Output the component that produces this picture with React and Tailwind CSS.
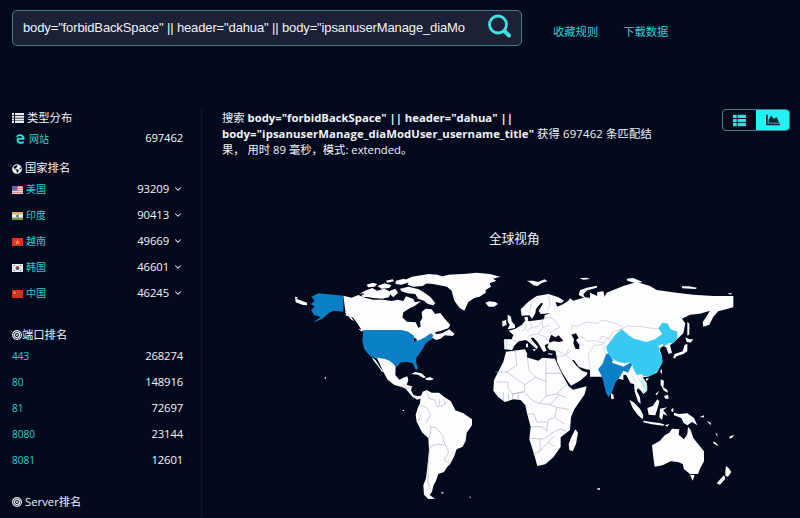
import React from 'react';
import { FaThList, FaChartArea, FaEdgeLegacy, FaGlobeAmericas } from 'react-icons/fa';
import { FiChevronDown } from 'react-icons/fi';

const Flag = ({ code }) => (
  <svg viewBox="0 0 22 16" className="w-[11px] h-2 shrink-0 mt-px">
    {code === 'us' && (
      <>
        <rect width="22" height="16" fill="#e8d5d6" />
        <path d="M0 1h22M0 5h22M0 9h22M0 13h22" stroke="#d98a80" strokeWidth="2" />
        <rect width="11" height="9" fill="#5c6aa8" />
      </>
    )}
    {code === 'in' && (
      <>
        <rect width="22" height="16" fill="#f2f0e4" />
        <rect width="22" height="5" fill="#e0b070" />
        <rect y="11" width="22" height="5" fill="#6f9f45" />
        <circle cx="11" cy="8" r="2.500" fill="#5360a0" />
      </>
    )}
    {code === 'vn' && (
      <>
        <rect width="22" height="16" fill="#dc3127" />
        <path d="M11 3l1.500 3.500h4l-3 2.500 1 4-3.500-2.300-3.500 2.300 1-4-3-2.500h4z" fill="#f5a83c" />
      </>
    )}
    {code === 'kr' && (
      <>
        <rect width="22" height="16" fill="#eeeef2" />
        <path d="M7 8a4 4 0 0 1 8 0z" fill="#c44450" />
        <path d="M7 8a4 4 0 0 0 8 0z" fill="#39508f" />
        <path d="M3 4l3-2M16 2l3 2M3 12l3 2M16 14l3-2" stroke="#444" strokeWidth="1.500" />
      </>
    )}
    {code === 'cn' && (
      <>
        <rect width="22" height="16" fill="#d92c23" />
        <path d="M5 2l1 2.500h2.500l-2 1.700.8 2.500-2.300-1.500-2.300 1.500.8-2.500-2-1.700h2.500z" fill="#f5a93c" />
        <path d="M11 2h1.500M13 5h1.500M11 9h1.500" stroke="#f5a93c" />
      </>
    )}
  </svg>
);

const ListIcon = () => (
  <svg viewBox="0 0 12 10" className="w-3 h-2.5" fill="#e9ebf2">
    <path d="M0 0h2v2H0zM3 0h9v2H3zM0 2.700h2v2H0zM3 2.700h9v2H3zM0 5.400h2v2H0zM3 5.400h9v2H3zM0 8.100h2V10H0zM3 8.100h9V10H3z" />
  </svg>
);

const Bullseye = () => (
  <svg viewBox="0 0 20 20" className="w-2.5 h-2.5" fill="none" stroke="#e9ebf2">
    <circle cx="10" cy="10" r="8.800" strokeWidth="2.400" />
    <circle cx="10" cy="10" r="5.200" strokeWidth="2.600" />
    <circle cx="10" cy="10" r="2" fill="#e9ebf2" stroke="none" />
  </svg>
);

const countries = [
  ['us', '美国', '93209'],
  ['in', '印度', '90413'],
  ['vn', '越南', '49669'],
  ['kr', '韩国', '46601'],
  ['cn', '中国', '46245'],
];

const ports = [
  ['443', '268274'],
  ['80', '148916'],
  ['81', '72697'],
  ['8080', '23144'],
  ['8081', '12601'],
];

const SEA = '#050a1e';

const WorldMap = () => (
  <svg viewBox="0 0 1350 735" className="w-[450px] h-[245px]" fill="#fdfdff">
    {/* North America */}
    <g>
      <path d="M160 107l25 6 20-8 20 8 25 6 30 0 25 4 18-4 17 4 8-14 22 8 5 10 18-4-18 14-16 8-19 12-3 15 14 13 26 2 8 16 7-3-2-14 7-12-2-18 12-10 18 2 10 14 16-3 12 16 18 20-6 10-24 8-16 4 3 6 18-3 22-12 16 14-6 6-24-2-12 10-14 4-10-6-15 10-17 8-16 5v-20l-17-10-20-5h-115l-15-15-13-20-12-15-20-5z" />
      <path d="M225 92l22-8 14 8 22-6 20 10-6 16-20 4-26-2-26-4-5-10-12 2zM230 74l18-6 14 4-8 8-20 2zM262 78l22-8 20 6-6 8-24 2zM300 92l16-6 8 12-14 14-8-8zM318 62l24-6 18 10-26 8-18-2zM330 86l26-6 30 8 20 12 16 12 14 18-6 6-16-4-12-10-18-6-8-14-24-2-18-6zM340 62l26-12 50-8 26 2 18 6-14 8-26 6-22 14-28 2-18-6 6-8zM288 62l20-4 4 6-20 4zM355 124l14-2 6 8-14 4zM215 104l12-2 4 8-14 2z" />
      <path d="M245 289l20 3 20 3 13 5 10 8 9 11-1 26 12 14 12-6 12-4 3 10-5 16 16 4-3 12 7 14 12 3 12-1 2 8-14 4-14-8-11-13-10-12-14-6-20-5-20-16-10-18-22-46z" />
      <path d="M246 291l12 11 12 20 12 15-6-2-13-18-14-18z" />
      <path d="M364 342l12-6 18 4 14 12-8 2-16-10zM406 355l14-4 12 6-10 4-14-1z" />
      <path d="M15 110l10 2-6 4 20 8 12 4 0 8-12-1-22-8z" />
      <path d="M205 206l14 4-4 5zM104 352h4v4h-4z" />
      <path d="M65 110l20-10 75 7v48l-12-1-18-2-14 8-20 17-26 10 22-16-20-6-8-14 10-12-12-6 12-10z" fill="#0b80c6" />
      <path d="M164 155l14 8 14 20-8-4-14-18z" />
      <path d="M220 210h115l20 5 17 12v18l16-5 17-8 17-12 8 5-4 11-18 12-8 16-10 14-11 15-1 12 6 20-6 5-10-20-18-5-20 3-8 12-14-10-10-8-13-5-20-3-20-3-13-12-10-14-5-22z" fill="#0b80c6" />
    </g>
    {/* Greenland, Iceland and the Arctic islands */}
    <path d="M402 70l30-14 44-12 55-3 28-3 40 4 32 8-22 6 10 6-20 8 4 10-16 10 0 8-18 12-16 4-18 12-12 26-14-8-16-22-8-30-14-12-22-4-20-4z" />
    <path d="M586 128l12-4 18 2 8 6-12 8-16 0z" />
    <path d="M710 62l20 0 14 4 20-8 8 6-18 6-12 8-12-2-12-10zM866 105l4-14 20-8 32-6-2 6-28 8-12 12 6 12zM868 55l22-2 10 4-20 2z" />
    {/* Europe and the Middle East */}
    <g transform="translate(540 0)">
      <path d="M103 268L102 238 125 238 130 225 116 212 135 207 155 195 165 183 163 172 173 170 175 184 200 181 222 178 224 166 240 160 212 162 206 152 220 130 212 130 198 146 196 160 186 176 178 166 155 167 152 148 175 125 200 108 235 102 265 112 282 122 274 130 256 126 262 140 280 132 295 122 300 115 310 122 345 112 370 115 386 119 382 98 400 95 406 118 460 98 460 360 425 350 400 345 388 332 356 331 350 345 330 362 303 377 294 365 275 335 261 305 260 290 256 272 240 270 232 262 236 250 224 256 230 273 220 275 212 262 204 248 191 233 182 233 188 243 204 260 200 268 190 258 176 246 168 240 146 244 134 256 126 270z" />
      <path d="M113 164l10 6 2 14 10 12 0 8-22 4 6-14-6-10zM96 184l12-4 2 14-12 6z" />
      <path d="M168 252l6-2 0 12-6 0zM186 268l12 0-4 6zM234 280l14 1-2 3-12-1z" />
      <path d="M237 240l7-16 12 8 10-6 14 16-12 4-18-2-12 4zM304 224l14-4 8 14-8 6 10 14 0 14-12-2-6-16 2-12z" fill={SEA} />
      <path d="M306 300l6 0 14 20 22 8 14 2-8 8-18-6-16-14z" fill={SEA} />
    </g>
    {/* Asia */}
    <g transform="translate(900 0)">
      <path d="M0 98L22 108 22 96 40 94 40 118 50 98 70 90 100 78 140 66 180 78 200 90 260 98 310 104 370 108 430 108 430 142 385 154 370 170 358 194 340 200 338 186 345 176 360 152 330 161 300 164 276 176 286 190 280 220 256 242 240 256 246 278 236 282 228 262 220 258 208 266 216 290 216 310 200 338 172 350 158 352 170 368 172 390 160 402 154 394 144 384 140 392 150 412 152 432 144 424 134 394 132 372 122 370 108 344 60 350 0 350z" />
      <path d="M292 185l6 6 0 32-6 4zM286 232l12 6 12 0-8 10-12-2zM292 252l0 22-12 8-18 6-14 6 6-12 24-8 6-20zM252 290l6 0-4 8z" />
      <path d="M110 56l20-2 28 12-20 4-26-8zM275 79l22 0 24 4-4 4-40-2zM412 100l14 0-4 4z" />
      <path d="M62 398l8 6 2 12-8 2zM212 330l4-2 0 14-4-4zM168 356l8-2-2 6-6 2z" />
      <path d="M118 420l12 6 20 20 10 20-2 12-14-12-16-22zM160 482l24 4 28 4 12 4-4 3-34-4-26-6zM172 444l16-6 14-20 6 6-4 16-8 26-20-2zM210 446l22-4-12 8 12 18-12-6-4 18-8-8zM212 358l10 4-2 20 12 8 2 8-12-6-10-18zM222 408l12-4 2 12-10 0zM196 402l12-10-8 14zM244 448l6-4 0 12-6-2zM252 458l14 4 26-2 20 14 10 22-16-10-14 10-12-8-6-14-22-8zM224 496l14-4-6 8z" />
      <path d="M328 472l14-6 0 6zM350 482l12 6 0 8zM376 518l6 4 0 8zM370 544l12 8 2 6-14-8zM418 530l14-6-4 8-8 4z" />
      <path d="M186 556l24-14 14-16 14-8 8-12 22 2-2 16 16 14 10-16 2-22 8 10 8 24 16 20 16 20 0 30-12 22-6 16-24 0-18-14-4-16-14-6-22-2-24 12-24 4-4-28zM300 644l14 2-6 16zM408 618l8 6 8 12-10 14-8-2 0-16zM402 646l4 10-16 18-10-4 14-16zM22 685h8v4h-8z" />
      <path d="M24 328L38 312 48 282 62 280 66 298 104 318 124 306 126 314 114 338 100 332 90 350 76 368 68 392 56 412 48 398 36 350z" fill="#0b80c6" />
      <path d="M68 300l36 14-2 6-36-12z" />
      <path d="M48 262L60 245 75 225 95 207 115 225 132 236 170 246 195 238 217 222 205 205 217 188 232 190 242 208 262 215 262 235 250 250 235 250 222 260 218 252 206 256 206 263 214 266 206 272 215 285 218 305 205 330 190 343 175 350 160 348 155 343 140 345 130 326 124 306 104 310 85 306 64 294 54 280z" fill="#36c9f3" />
      <path d="M154 350l10 12 8 16-2 16-10 8-2-6 6-12-12-20z" fill="#c4f1ee" />
    </g>
    {/* Africa */}
    <path d="M648 275L705 268 712 282 710 292 745 302 757 293 795 296 800 308 815 340 835 377 849 389 890 379 884 403 853 448 843 472 840 510 812 532 812 560 790 592 766 613 742 618 732 582 718 538 722 500 711 460 706 436 692 420 670 418 645 426 625 412 610 392 612 360 626 333 640 305z" />
    <path d="M856 508l8 10-6 34-10 22-10-4-2-18 8-20z" />
    {/* South America */}
    <g transform="translate(0 330)">
      <path d="M392 80L398 65 410 60 425 68 447 68 464 82 482 93 491 110 496 121 520 130 546 148 546 166 530 188 527 212 518 230 500 238 492 260 480 283 472 290 462 306 445 312 438 332 430 347 426 365 419 375 435 386 415 387 402 374 400 346 408 325 412 290 417 240 415 205 396 187 380 155 377 135 383 115 390 100zM452 366l10 2-4 4zM536 380l6 0 0 4zM338 120h4v3h-4z" />
    </g>
    {/* National borders */}
    <g fill="none" stroke="#b4b2bc" strokeWidth="2">
      <path d="M410 394l8 22 16 4 8 20 18-4 14-12M448 418l0 18M462 418l4 16M392 436l20 8 10 20-14 24M384 460l8 6-6 16M418 500l20 2 22 28 0 10M424 500l-6 34M460 540l6 14 10 22M420 560l24-8 20 4M420 560l-6 60 0 50 8 24M476 576l-14 24 16 10M340 372l10 14 18-6" />
      <path d="M616 336h34l54 38 0 20-36 8-14-18 0-18-34 0M650 336l30-20-4-46M704 374l34-22-20-18-6-42M738 352l30 12 0 44-20 22-20-8-22-24M704 396l-36 6M768 364l0-64M768 340h48M768 408l32-6 28 10M800 402l30-30M640 396l0 24M656 400l0 20M668 402l0 15M684 402l0 15M748 430l32 4 20 8-6 30-20 8-4 34M712 462l20 0 8 24 30 0M720 535l40 2 28-18M724 500l30 0 20 14M750 537l0 36-20 10M750 573l24-26 20 12M800 442l36 6M780 434l28-30M794 472l30 20M784 519l28-12 16 6M774 547l20-20" />
      <path d="M640 244l12 0-4 22M665 238l16 6M694 214l14-8 0-16M710 214l16-12-6-18M710 236l10-10 24-4M724 202l20-2 10-14M744 222l14-20 22-6M744 222l20 8 10 14M758 202l-2-24 18-6M774 172l18 6 18 24-30 14M718 160l6-30 20-20M770 152l10-14-4-30M800 270l24 14 18-10M800 290l28-4 20 16M828 286l8-22M866 250l16 8M846 210l0-14 14 4 30-14 34 4 10-10 30 6 36 14M872 228l20 16 22-2 30 8M896 282l16-26 24-2 16-18M900 322l-6-40M932 316l16-30-8-30M928 240l8-12 40 16M952 240l18-24 26-10M995 206l18-8 40 2 40 6 14 0M1026 346l14 24M1040 350l14 16 10 18" strokeOpacity=".8" />
    </g>
  </svg>
);

export default function App() {
  return (
    <div className="w-[800px] h-[518px] overflow-hidden flex flex-col bg-[#040a1e] text-[#f2f4f9] font-['Open_Sans','Noto_Sans_CJK_SC',sans-serif]">
      <header className="h-[108px] shrink-0 flex items-start pl-3 pt-2.5">
        <div className="w-[510px] h-9 shrink-0 flex items-center rounded-[5px] border border-[#3f7c86] bg-[#1c2137] pl-2.5">
          <div className="w-[442px] shrink-0 overflow-hidden whitespace-nowrap text-[13px] leading-5 tracking-[-0.13px] text-[#f1f2f7] font-['Liberation_Sans',Arial,sans-serif]">
            body="forbidBackSpace" || header="dahua" || body="ipsanuserManage_diaMod
          </div>
          <svg viewBox="0 0 24 24" className="w-6 h-6 ml-[22px] -mt-1" fill="none" stroke="#41e0e0">
            <circle cx="11" cy="10.500" r="8.500" strokeWidth="2.800" />
            <path d="M17.500 17l4.500 4.500" strokeWidth="4" strokeLinecap="round" />
          </svg>
        </div>
        <nav className="flex gap-[25px] ml-[31px] mt-[13px] text-[11.300px] leading-[18px] text-[#35cfd2]">
          <a>收藏规则</a>
          <a>下载数据</a>
        </nav>
      </header>

      <div className="flex flex-1 min-h-0">
        <aside className="w-[202px] shrink-0 border-r border-[#12172b] pl-3 pr-[18px] text-[11.300px]">
          <h2 className="h-5 flex items-center gap-[3px]"><ListIcon />类型分布</h2>
          <div className="h-[21px] flex items-center">
            <FaEdgeLegacy size={10} color="#2fdcd8" className="ml-[3px]" />
            <span className="ml-1 mt-px text-[10px] text-[#2fcfca]">网站</span>
            <span className="ml-auto tracking-[-0.15px]">697462</span>
          </div>
          <h2 className="h-[17px] mt-[11px] -mb-px flex items-center gap-[3px]"><FaGlobeAmericas size={10} />国家排名</h2>
          <ul>
            {countries.map(([code, name, count]) => (
              <li key={code} className="h-[26px] flex items-center">
                <Flag code={code} />
                <span className="ml-[3px] text-[10px] text-[#2fcfca]">{name}</span>
                <span className="ml-auto tracking-[-0.1px]">{count}</span>
                <FiChevronDown size={10} strokeWidth={2.5} className="ml-1" />
              </li>
            ))}
          </ul>
          <h2 className="h-5 mt-[19px] flex items-center"><Bullseye />端口排名</h2>
          <ul className="-mt-0.5">
            {ports.map(([port, count]) => (
              <li key={port} className="h-[26px] flex items-center justify-between">
                <span className="text-[10px] text-[#2fcfca]">{port}</span>
                <span className="tracking-[-0.15px]">{count}</span>
              </li>
            ))}
          </ul>
          <h2 className="h-5 mt-[19px] flex items-center gap-[3px]"><Bullseye />Server排名</h2>
        </aside>

        <main className="flex-1 flex flex-col pl-5">
          <div className="flex justify-between pr-[10px] h-[118px]">
            <p className="mt-[2px] text-[11.300px] leading-4 whitespace-nowrap">
              搜索 <b>body="forbidBackSpace" || header="dahua" ||</b><br />
              <b className="tracking-[0.1px]">body="ipsanuserManage_diaModUser_username_title"</b> <span className="tracking-[0.18px]">获得 697462 条匹配结</span><br />
              果， 用时 89 毫秒，模式: extended。
            </p>
            <div className="mt-px w-[68px] h-[22px] flex shrink-0 overflow-hidden rounded-[4px] border border-[#3b7f8b]">
              <button className="w-[33px] flex items-center justify-center text-[#2fe3e3]"><FaThList size={13} /></button>
              <button className="flex-1 flex items-center justify-center bg-[#25f0f2] text-[#0a2536]"><FaChartArea size={14} /></button>
            </div>
          </div>
          <h1 className="h-6 ml-[267px] text-[12.700px] leading-6">全球视角</h1>
          <div className="ml-[68px] mt-[10px]"><WorldMap /></div>
        </main>
      </div>
    </div>
  );
}
